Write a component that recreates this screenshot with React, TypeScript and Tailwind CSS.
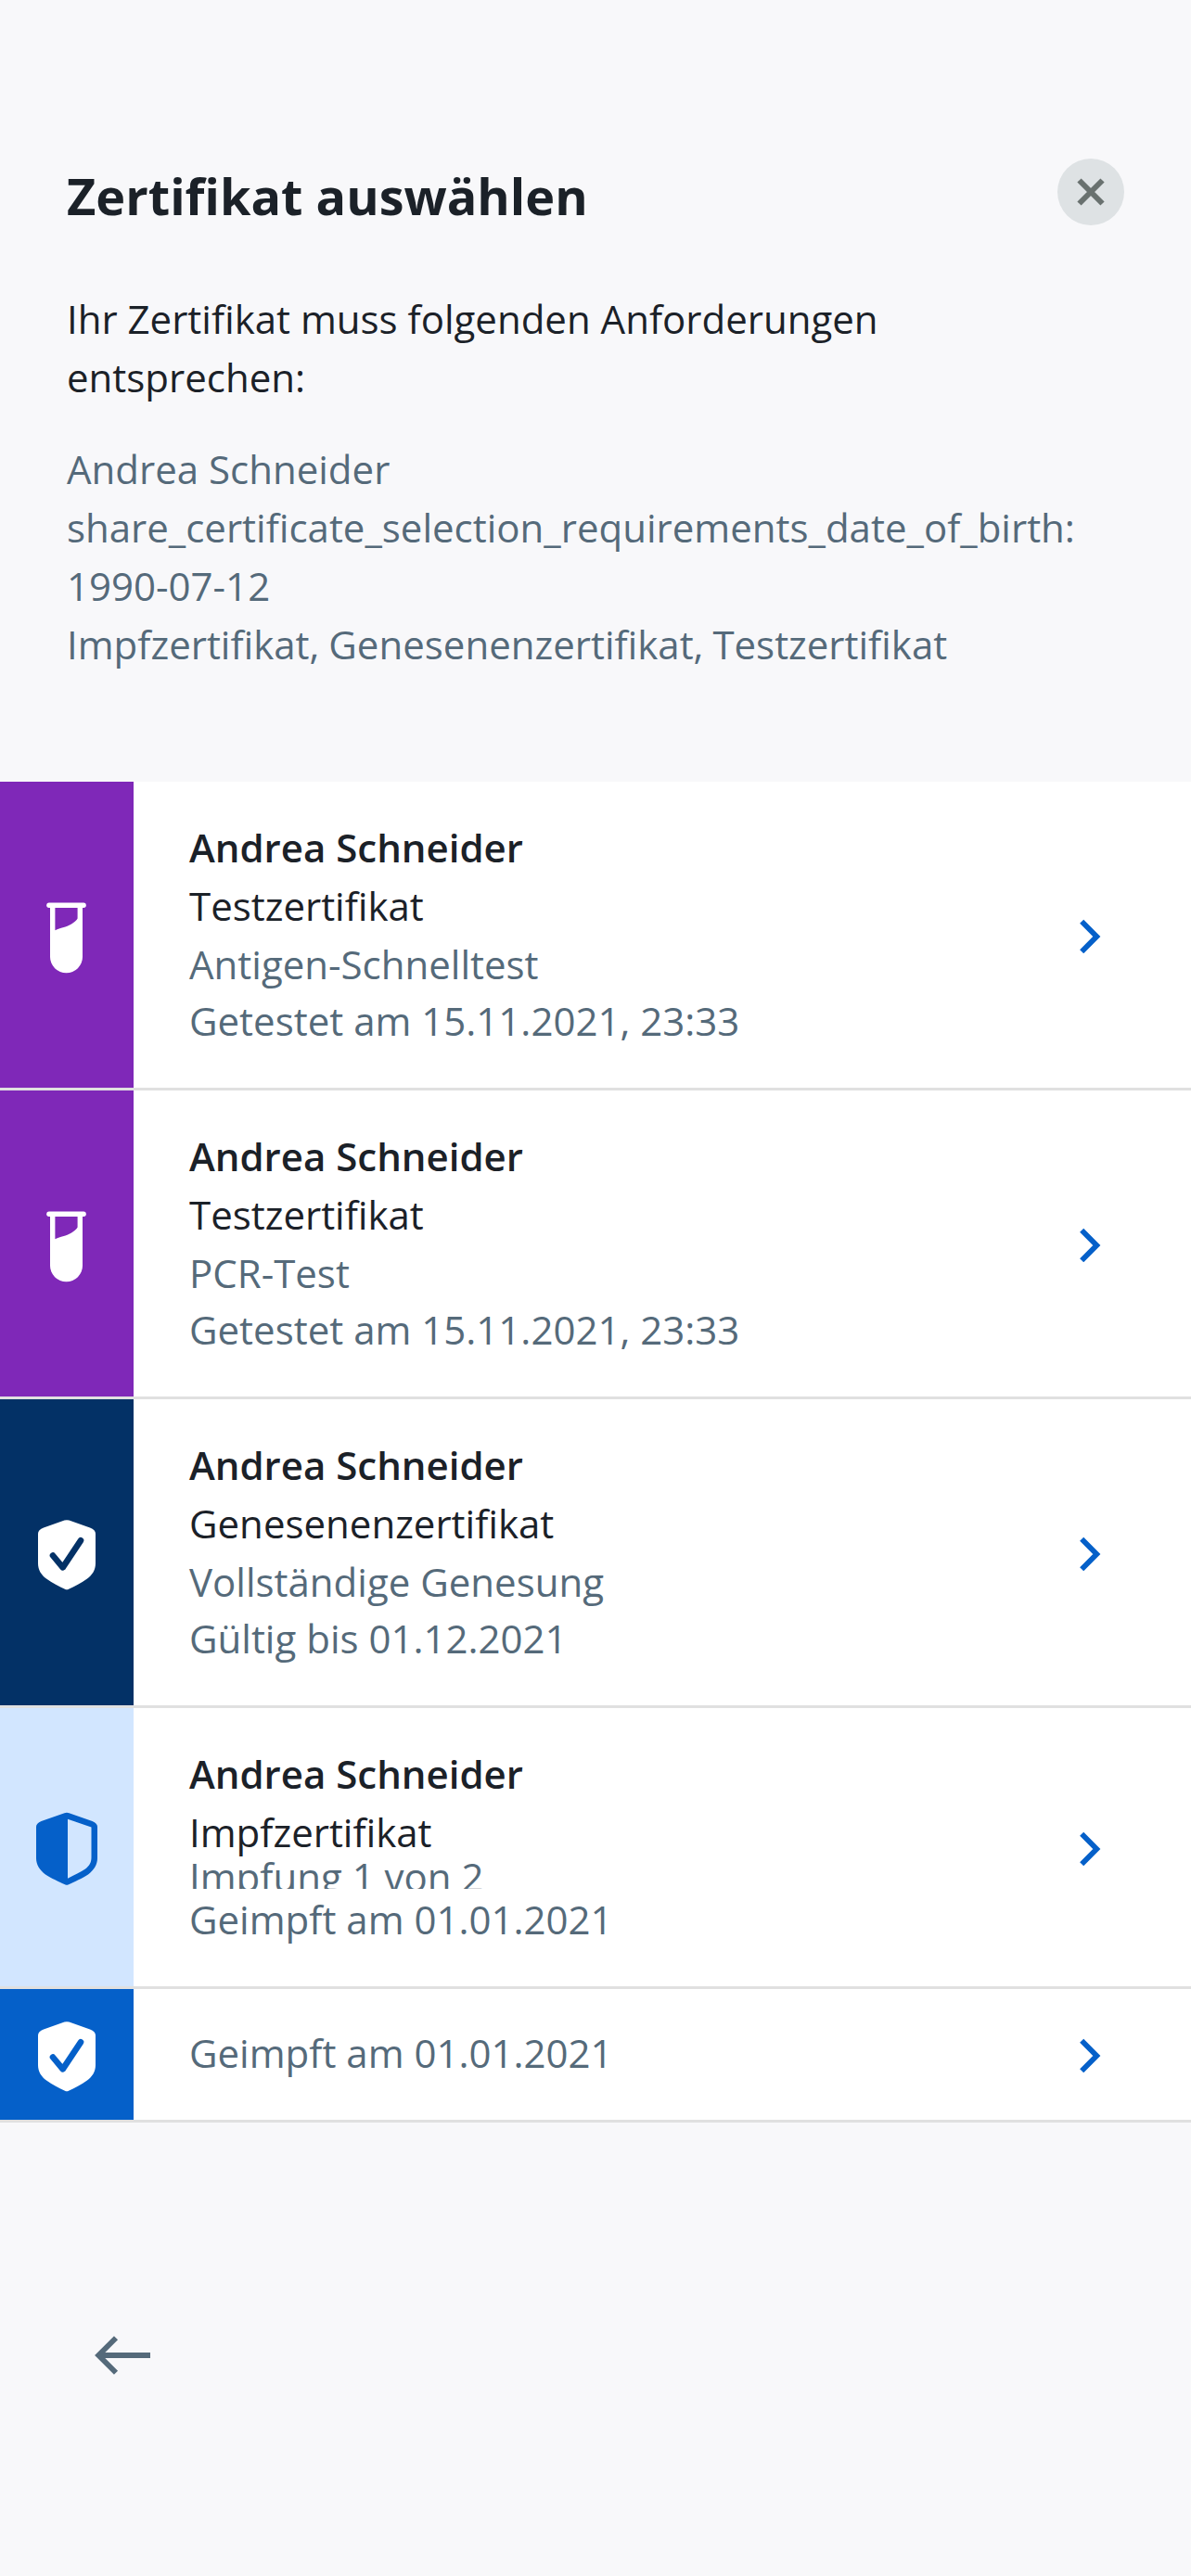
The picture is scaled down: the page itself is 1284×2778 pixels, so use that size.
import React from "react";

const Tube = () => (
  <svg width="44" height="84" viewBox="0 0 44 84" fill="none">
    <path d="M2.9 10.3H40.1" stroke="#fff" strokeWidth="5.4" strokeLinecap="round" />
    <path
      fill="#fff"
      fillRule="evenodd"
      d="M4 12H39V66a17.5 17.2 0 0 1-35 0ZM9.4 13V37.3C13.5 35 17 34.4 20.5 33.4C26 32 32 27.5 33.6 24.5V13Z"
    />
  </svg>
);

const ShieldCheck = ({ color }: { color: string }) => (
  <svg width="64" height="84" viewBox="0 0 64 84" fill="none">
    <path
      fill="#fff"
      d="M29.5 7.6Q32 6.7 34.5 7.6L57 15.6Q63 18 63 22V54C63 61 59.5 66.5 54 70.5C48 75 40 79 34 81.8Q32 82.8 30 81.8C24 79 16 75 10 70.5C4.5 66.5 1 61 1 54V22Q1 18 7 15.6Z"
    />
    <path d="M17 45.5L27.7 58.3L47 29.3" stroke={color} strokeWidth="6.6" strokeLinecap="round" strokeLinejoin="round" />
  </svg>
);

const ShieldHalf = () => (
  <svg width="66" height="84" viewBox="0 0 66 84" fill="none">
    <path
      fill="#0560c9"
      fillRule="evenodd"
      d="M30.5 5.2Q33 4.3 35.5 5.2L60.5 14Q66 16.5 66 20V54C66 61 62 67 56 71.5C50 75.5 41 79.5 35 82.3Q33 83.3 31 82.3C25 79.5 16 75.5 10 71.5C4 67 0 61 0 54V20Q0 16.5 5.5 14ZM34 11.7V75.7C41 72 48 69 53 65.5C57.5 62 59.5 58.5 59.5 53V20.5Z"
    />
  </svg>
);

const rows = [
  { h: "h-[333px]", bg: "bg-[#7f28b8]", icon: <Tube />, lines: ["Testzertifikat", "Antigen-Schnelltest", "Getestet am 15.11.2021, 23:33"] },
  { h: "h-[333px]", bg: "bg-[#7f28b8]", icon: <Tube />, lines: ["Testzertifikat", "PCR-Test", "Getestet am 15.11.2021, 23:33"] },
  { h: "h-[333px]", bg: "bg-[#033166]", icon: <ShieldCheck color="#033166" />, lines: ["Genesenenzertifikat", "Vollständige Genesung", "Gültig bis 01.12.2021"] },
  { h: "h-[303px]", bg: "bg-[#d2e6ff]", icon: <ShieldHalf />, lines: ["Impfzertifikat", "Impfung 1 von 2", "Geimpft am 01.01.2021"], clip: true },
  { h: "h-[144px]", bg: "bg-[#0560c9]", icon: <ShieldCheck color="#0560c9" />, lines: ["Geimpft am 01.01.2021"], only: true },
];

export default function App() {
  return (
    <main className="flex h-[2778px] w-[1284px] flex-col overflow-hidden bg-[#f8f8fa] font-['Open_Sans',sans-serif] text-[42px] leading-[63px] text-[#1b2128]">
      <header className="flex h-[843px] shrink-0 flex-col px-[72px] pt-[171px]">
        <div className="flex h-[141px] items-start justify-between">
          <h1 className="text-[54px] font-bold leading-[81px]">Zertifikat auswählen</h1>
          <button aria-label="Schließen" className="flex size-[72px] items-center justify-center rounded-full bg-[#dee2e4]">
            <svg width="30" height="30" viewBox="0 0 30 30">
              <path d="M2.5 2.5L27.5 27.5M27.5 2.5L2.5 27.5" stroke="#69716f" strokeWidth="6" />
            </svg>
          </button>
        </div>
        <p>
          Ihr Zertifikat muss folgenden Anforderungen
          <br />
          entsprechen:
        </p>
        <p className="mt-9 text-[#556a7a]">
          Andrea Schneider
          <br />
          share_certificate_selection_requirements_date_of_birth:
          <br />
          1990-07-12
          <br />
          <span className="[word-spacing:-1px]">Impfzertifikat, Genesenenzertifikat, Testzertifikat</span>
        </p>
      </header>
      {rows.map((r, i) => (
        <section key={i} className={`flex shrink-0 border-b-[3px] border-[#e0e0e0] bg-white ${r.h}`}>
          <div className={`flex w-[144px] items-center justify-center ${r.only ? "pb-px" : ""} ${r.bg}`}>{r.icon}</div>
          <div className="flex flex-1 flex-col pl-[60px] pt-[39px]">
            {r.only ? (
              <span className="-mt-[2px] text-[#556a7a]">{r.lines[0]}</span>
            ) : (
              <>
                <b className="font-semibold">Andrea Schneider</b>
                <span>{r.lines[0]}</span>
                <span className={r.clip ? "mb-[3px] h-[30px] overflow-hidden leading-[33px] text-[#556a7a]" : "text-[#556a7a]"}>
                  {r.lines[1]}
                </span>
                <span className="-mt-[2px] text-[#556a7a]">{r.lines[2]}</span>
              </>
            )}
          </div>
          <div className={`flex items-center pr-[96px] ${r.only ? "pb-px" : ""}`}>
            <svg width="24" height="40" viewBox="0 0 24 40" fill="none">
              <path d="M2.2 5.8L18.3 22L2.2 38.2" stroke="#0560c9" strokeWidth="5.8" />
            </svg>
          </div>
        </section>
      ))}
      <footer className="pl-[102px] pt-[230px]">
        <svg width="62" height="44" viewBox="0 0 62 44" fill="none">
          <path d="M60 21H5M23 2.2L4.2 21L23 39.8" stroke="#556a7a" strokeWidth="5.8" />
        </svg>
      </footer>
    </main>
  );
}
